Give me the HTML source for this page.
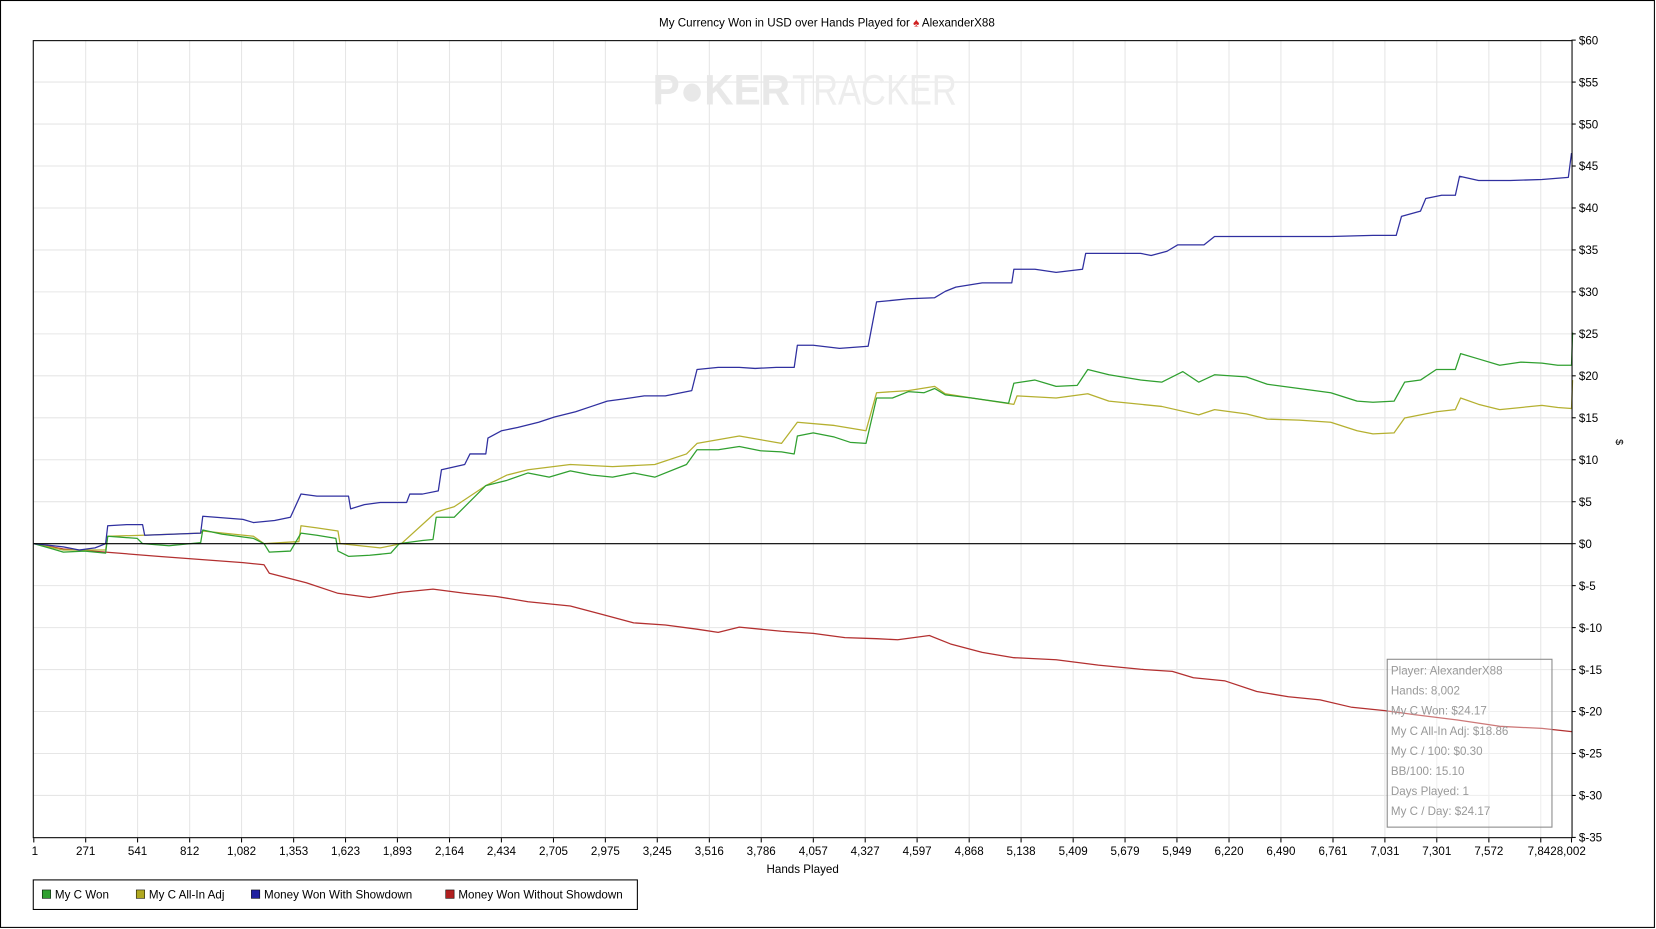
<!DOCTYPE html>
<html><head><meta charset="utf-8"><style>
html,body{margin:0;padding:0;background:#fff;width:1656px;height:929px;overflow:hidden}
svg{display:block}
text{font-family:"Liberation Sans",sans-serif;fill:#000}
</style></head><body>
<svg id="s" width="1656" height="929" viewBox="0 0 1568 880" preserveAspectRatio="none" xmlns="http://www.w3.org/2000/svg">
<rect x="0.5" y="0.5" width="1566" height="878" fill="#fff" stroke="#000" stroke-width="1"/>
<text x="783" y="25" font-size="11" text-anchor="middle">My Currency Won in USD over Hands Played for <tspan fill="#d02020">♠</tspan> AlexanderX88</text>
<g id="grid" stroke="#e6e6e6" stroke-width="1"></g>
<text x="618" y="99" font-size="40" font-weight="bold" style="fill:#e8e8e8" textLength="130" lengthAdjust="spacingAndGlyphs">P●KER</text>
<text x="750" y="99" font-size="40" style="fill:#ededed" textLength="156" lengthAdjust="spacingAndGlyphs">TRACKER</text>
<g fill="none" stroke-width="1.2" stroke-linejoin="round">
<polyline stroke="#b33030" points="32,515 60,520 100,523 150,527 190,530 230,533 250,535 255,543 290,552 320,562 350,566 380,561 410,558 440,562 470,565 500,570 540,574 570,582 600,590 630,592 660,596 680,599 700,594 740,598 770,600 800,604 830,605 850,606 880,602 900,610 930,618 960,623 1000,625 1040,630 1080,634 1110,636 1130,642 1160,645 1190,655 1220,660 1250,663 1280,670 1310,673 1340,677 1380,682 1420,688 1460,690 1488,693"/>
<polyline stroke="#b5b030" points="32,515 60,521 100,521 102,508 135,507 190,505 192,503 240,508 250,515 283,513 285,498 300,500 320,503 322,515 360,519 380,515 413,485 430,480 460,460 480,450 500,445 540,440 580,442 620,440 650,430 660,420 700,413 740,420 755,400 790,403 820,408 830,372 860,370 885,366 895,373 920,377 960,383 963,375 1000,377 1030,373 1050,380 1100,385 1135,393 1150,388 1180,392 1200,397 1230,398 1260,400 1285,408 1300,411 1320,410 1330,396 1360,390 1378,388 1383,377 1400,383 1420,388 1460,384 1475,386 1488,387 1489,360"/>
<polyline stroke="#30a030" points="32,515 50,520 60,523 80,522 100,524 102,508 130,510 135,515 160,517 190,514 192,502 210,506 240,510 250,515 255,523 275,522 285,505 300,507 318,510 320,522 330,527 350,526 370,524 378,515 400,512 410,511 413,490 430,490 450,470 460,460 480,455 500,448 520,452 540,446 560,450 580,452 600,448 620,452 650,440 660,426 680,426 700,423 720,427 740,428 752,430 755,413 770,410 790,414 805,419 820,420 830,377 845,377 860,371 875,372 885,368 895,374 920,377 955,382 960,363 980,360 1000,366 1020,365 1030,350 1050,355 1080,360 1100,362 1120,352 1135,362 1150,355 1180,357 1200,364 1230,368 1260,372 1285,380 1300,381 1320,380 1330,362 1345,360 1360,350 1378,350 1383,335 1400,340 1420,346 1440,343 1460,344 1475,346 1488,346 1489,315"/>
<polyline stroke="#3030a0" points="32,515 60,518 75,521 90,519 100,515 102,498 120,497 135,497 137,507 190,505 192,489 230,492 240,495 260,493 275,490 285,468 300,470 330,470 332,482 345,478 360,476 385,476 388,468 400,468 415,465 418,445 440,440 445,430 460,430 462,415 475,408 490,405 510,400 525,395 545,390 560,385 575,380 590,378 610,375 630,375 655,370 660,350 680,348 700,348 715,349 735,348 752,348 755,327 770,327 795,330 822,328 830,286 860,283 885,282 895,276 905,272 930,268 958,268 960,255 980,255 1000,258 1025,255 1028,240 1050,240 1080,240 1090,242 1105,238 1115,232 1140,232 1150,224 1200,224 1260,224 1300,223 1322,223 1327,205 1345,200 1350,188 1365,185 1378,185 1382,167 1400,171 1430,171 1460,170 1485,168 1488,145"/>
</g>
<line x1="32" y1="515" x2="1488" y2="515" stroke="#000" stroke-width="1"/>
<rect x="31.5" y="38.5" width="1457" height="755" fill="none" stroke="#000" stroke-width="1"/>
<g id="lab" font-size="11"></g>
<text x="760" y="827" font-size="11" text-anchor="middle">Hands Played</text>
<text x="1530" y="416" font-size="10" transform="rotate(90 1530 416)">$</text>
<rect x="1313.5" y="624.5" width="156" height="159" fill="#fff" fill-opacity="0.35" stroke="#888"/>
<g font-size="11">
<text x="1317" y="639" style="fill:#999">Player: AlexanderX88</text>
<text x="1317" y="658" style="fill:#999">Hands: 8,002</text>
<text x="1317" y="677" style="fill:#999">My C Won: $24.17</text>
<text x="1317" y="696" style="fill:#999">My C All-In Adj: $18.86</text>
<text x="1317" y="715" style="fill:#999">My C / 100: $0.30</text>
<text x="1317" y="734" style="fill:#999">BB/100: 15.10</text>
<text x="1317" y="753" style="fill:#999">Days Played: 1</text>
<text x="1317" y="772" style="fill:#999">My C / Day: $24.17</text>
</g>
<rect x="31.5" y="833.5" width="572" height="28" fill="#fff" stroke="#000"/>
<g font-size="11">
<rect x="40" y="843" width="8" height="8" fill="#30a030" stroke="#000" stroke-width="0.5"/><text x="52" y="851">My C Won</text>
<rect x="129" y="843" width="8" height="8" fill="#b0a820" stroke="#000" stroke-width="0.5"/><text x="141" y="851">My C All-In Adj</text>
<rect x="238" y="843" width="8" height="8" fill="#2020a0" stroke="#000" stroke-width="0.5"/><text x="250" y="851">Money Won With Showdown</text>
<rect x="422" y="843" width="8" height="8" fill="#b02020" stroke="#000" stroke-width="0.5"/><text x="434" y="851">Money Won Without Showdown</text>
</g>
</svg>
<script>
var NS="http://www.w3.org/2000/svg",g=document.getElementById("grid"),lab=document.getElementById("lab");
function el(p,t,a,txt){var e=document.createElementNS(NS,t);for(var k in a)e.setAttribute(k,a[k]);if(txt!=null)e.textContent=txt;p.appendChild(e);return e;}
for(var i=0;i<=19;i++){var v=60-5*i,y=38+i*39.75;
 if(i>0&&i<19)el(g,"line",{x1:32,x2:1488,y1:y,y2:y});
 el(lab,"line",{x1:1488,x2:1492,y1:y,y2:y,stroke:"#000"});
 el(lab,"text",{x:1495,y:y+4},v<0?"$-"+(-v):"$"+v);}
var ticks=[1,271,541,812,1082,1353,1623,1893,2164,2434,2705,2975,3245,3516,3786,4057,4327,4597,4868,5138,5409,5679,5949,6220,6490,6761,7031,7301,7572,7842];
ticks.forEach(function(h,k){var x=32+(h-1)/8001*1456;
 if(k>0)el(g,"line",{x1:x,x2:x,y1:38,y2:794});
 el(lab,"line",{x1:x,x2:x,y1:794,y2:798,stroke:"#000"});
 var s=h.toLocaleString("en-US");
 if(k==29)el(lab,"text",{x:1474,y:810,"text-anchor":"end"},s);
 else el(lab,"text",{x:k==0?x+1:x,y:810,"text-anchor":"middle"},s);});
el(lab,"line",{x1:1488,x2:1488,y1:794,y2:798,stroke:"#000"});
el(lab,"text",{x:1474,y:810,"text-anchor":"start"},"8,002");
</script>
</body></html>
